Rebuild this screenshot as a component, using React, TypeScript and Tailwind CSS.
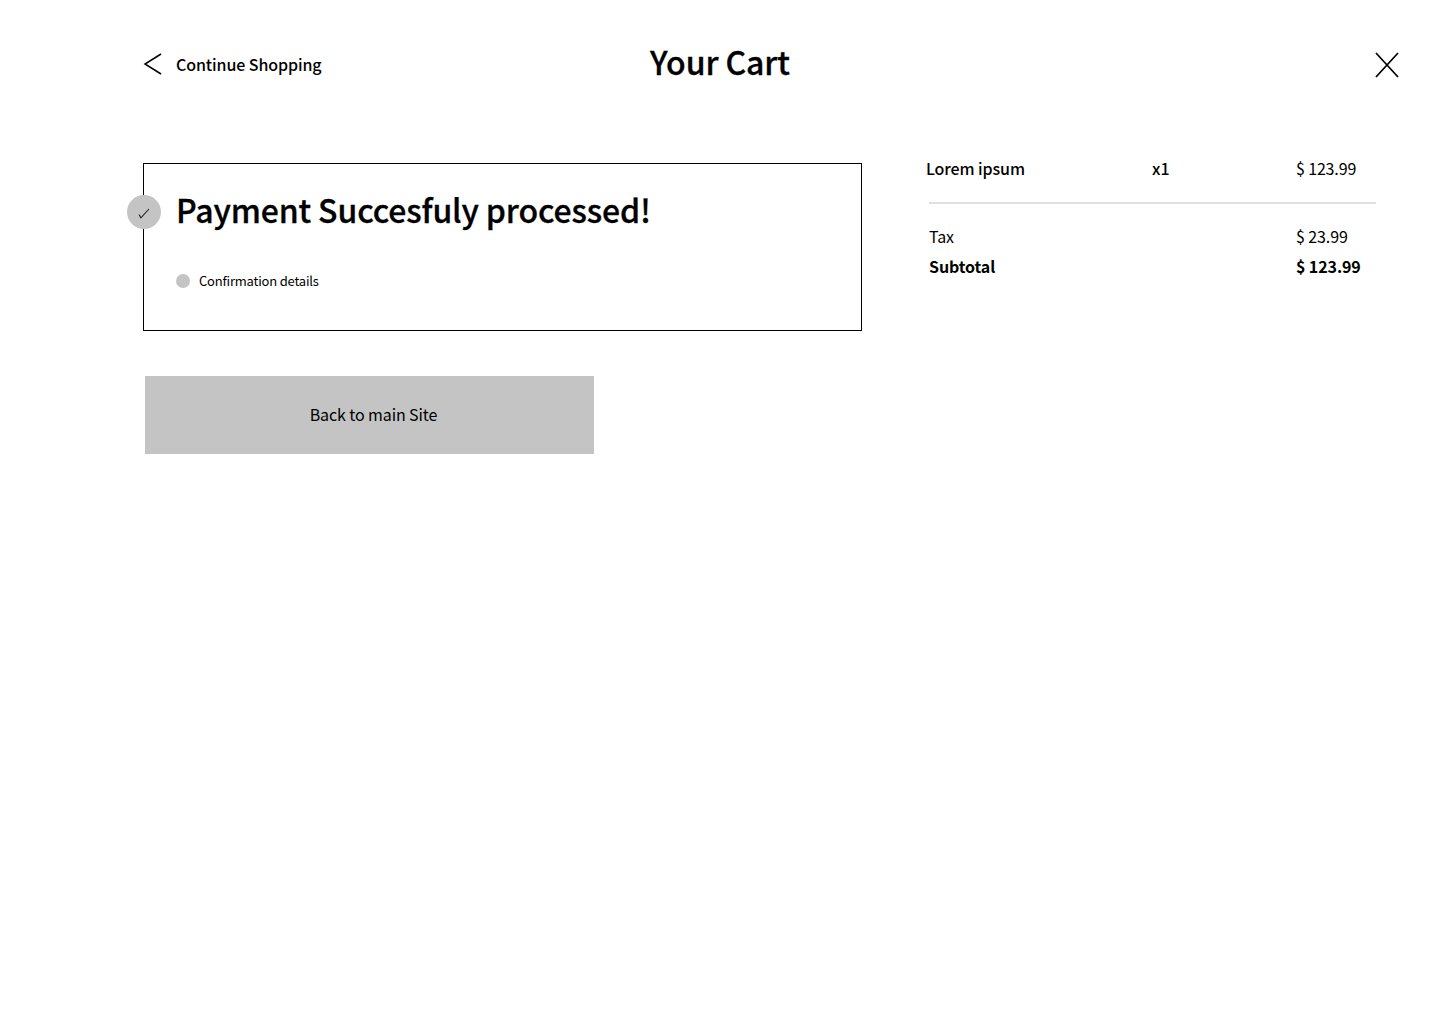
import React from "react";

export default function App() {
  return (
    <div className="w-[1440px] h-[1024px] bg-white text-black overflow-hidden font-['Noto_Sans_CJK_JP','Noto_Sans',sans-serif]">
      <header className="flex items-start h-[163px] pl-[143px] pr-[41px] pt-[40px] relative">
        <div className="flex items-center gap-[13px] h-[48px]">
          <svg width="20" height="24" viewBox="0 0 20 24" fill="none" stroke="black" strokeWidth="1.5"><path d="M18 2 L2 12 L18 22" /></svg>
          <span className="text-[16px] tracking-[-0.1px] font-medium">Continue Shopping</span>
        </div>
        <h1 className="absolute left-0 right-0 top-[38px] text-center text-[32px] tracking-[-0.1px] leading-[46px] font-medium [-webkit-text-stroke:0.3px_black]">Your Cart</h1>
        <svg className="ml-auto mt-[12px]" width="24" height="26" viewBox="0 0 24 26" fill="none" stroke="black" strokeWidth="1.75"><path d="M1 1 L23 25 M23 1 L1 25" /></svg>
      </header>
      <div className="flex items-start pl-[143px]">
        <div className="w-[719px]">
          <section className="relative h-[168px] border border-black pl-[32px] pt-[21px]">
            <span className="absolute left-[-17px] top-[31px] w-[34px] h-[34px] rounded-full bg-[#c4c4c4] flex items-center justify-center">
              <svg className="mt-[2px]" width="12" height="11" viewBox="0 0 12 11" fill="none" stroke="#222" strokeWidth="1.1"><path d="M1 6.5 L2.9 9.8 L11 1" /></svg>
            </span>
            <h2 className="text-[32px] tracking-[-0.14px] leading-[48px] font-medium [-webkit-text-stroke:0.3px_black]">Payment Succesfuly processed!</h2>
            <div className="flex items-center gap-[9px] mt-[38px]">
              <span className="w-[14px] h-[14px] rounded-full bg-[#c4c4c4]" />
              <span className="text-[13px] tracking-[-0.2px] leading-[20px]">Confirmation details</span>
            </div>
          </section>
          <button className="mt-[45px] ml-[2px] w-[449px] h-[78px] bg-[#c4c4c4] text-[16px] tracking-[-0.1px] pl-[8px] pb-[2px] block">Back to main Site</button>
        </div>
        <aside className="ml-[64px] w-[450px] text-[16px]">
          <div className="flex h-[41px] items-start border-b-2 border-[#e0e0e0] ml-[3px] w-[447px] leading-[10px]">
            <span className="w-[226px] ml-[-3px] font-medium tracking-[-0.1px]">Lorem ipsum</span>
            <span className="w-[144px] font-medium">x1</span>
            <span className="tracking-[-0.15px]">$ 123.99</span>
          </div>
          <div className="ml-[3px] mt-[20px] flex leading-[24px] tracking-[-0.1px]"><span className="w-[367px]">Tax</span><span>$ 23.99</span></div>
          <div className="ml-[3px] mt-[6px] flex font-bold leading-[24px] tracking-[-0.1px]"><span className="w-[367px]">Subtotal</span><span>$ 123.99</span></div>
        </aside>
      </div>
    </div>
  );
}
